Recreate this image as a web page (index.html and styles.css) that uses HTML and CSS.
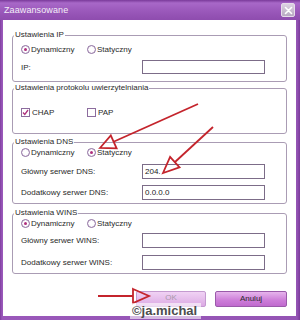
FILE: index.html
```html
<!DOCTYPE html>
<html lang="pl">
<head>
  <meta charset="UTF-8">
  <title>Zaawansowane</title>
  <link rel="stylesheet" href="styles.css">
</head>
<body>
  <div class="window">
    <div class="titlebar">
      <span class="title">Zaawansowane</span>
      <span class="close">
        <svg width="11" height="11" viewBox="0 0 11 11"><path d="M2.5 2.5l6 6M8.5 2.5l-6 6" stroke="#ffffff" stroke-width="1.6" stroke-linecap="round"/></svg>
      </span>
    </div>
    <div class="client">
      <fieldset class="group group-ip">
        <legend>Ustawienia IP</legend>
        <div class="rows">
          <div class="choice">
            <label class="opt"><span class="radio on"></span>Dynamiczny</label>
            <label class="opt"><span class="radio"></span>Statyczny</label>
          </div>
          <div class="field"><span class="label">IP:</span><span class="input"></span></div>
        </div>
      </fieldset>

      <fieldset class="group group-auth">
        <legend>Ustawienia protokolu uwierzytelniania</legend>
        <div class="rows">
          <div class="choice">
            <label class="opt"><span class="check on"><svg width="7" height="7" viewBox="0 0 7 7"><path d="M1 3.5l1.8 2L6 1" fill="none" stroke="#b0307e" stroke-width="1.3"/></svg></span>CHAP</label>
            <label class="opt"><span class="check"></span>PAP</label>
          </div>
        </div>
      </fieldset>

      <fieldset class="group group-dns">
        <legend>Ustawienia DNS</legend>
        <div class="rows">
          <div class="choice">
            <label class="opt"><span class="radio"></span>Dynamiczny</label>
            <label class="opt"><span class="radio on"></span>Statyczny</label>
          </div>
          <div class="field"><span class="label">Główny serwer DNS:</span><span class="input">204.</span></div>
          <div class="field"><span class="label">Dodatkowy serwer DNS:</span><span class="input">0.0.0.0</span></div>
        </div>
      </fieldset>

      <fieldset class="group group-wins">
        <legend>Ustawienia WINS</legend>
        <div class="rows">
          <div class="choice">
            <label class="opt"><span class="radio on"></span>Dynamiczny</label>
            <label class="opt"><span class="radio"></span>Statyczny</label>
          </div>
          <div class="field"><span class="label">Główny serwer WINS:</span><span class="input"></span></div>
          <div class="field"><span class="label">Dodatkowy serwer WINS:</span><span class="input"></span></div>
        </div>
      </fieldset>

      <div class="actions">
        <button class="btn btn-ok">OK</button>
        <button class="btn">Anuluj</button>
      </div>
    </div>

    <svg class="marks" width="300" height="320" viewBox="0 0 300 320">
      <g fill="none" stroke="#c4242c" stroke-width="1.8" stroke-linejoin="miter">
        <path d="M198 104L113 142"/>
        <path d="M100 148L110.8 135.5L116.6 148.3Z"/>
        <path d="M213 127L175 162"/>
        <path d="M163 173L170.1 157L179.5 167.4Z"/>
        <path d="M98 296H133"/>
        <path d="M133 289L149 296L133 303Z"/>
      </g>
    </svg>
    <span class="stamp">©ja.michal</span>
  </div>
</body>
</html>
```

FILE: styles.css
```css
body {
  margin: 0;
  font-family: 'Liberation Sans', Arial, sans-serif;
  font-size: 8px;
  color: #2a2a2a;
  background: #ffffff;
}
.window {
  position: relative;
  width: 300px;
  height: 320px;
  display: flex;
  flex-direction: column;
  background: linear-gradient(to right, #7e3e9e, #9a58ba 2px, #9454b4 297px, #7a3a9a);
}
.titlebar {
  height: 20px;
  display: flex;
  align-items: center;
  justify-content: space-between;
  padding: 0 5px 0 4px;
  background: linear-gradient(to bottom, #7a3a9a 0, #a868c8 3px, #9c5abc 10px, #8e4cae 20px);
}
.title {
  color: #f4eef8;
  font-size: 9px;
  letter-spacing: 0.1px;
}
.close {
  width: 12px;
  height: 12px;
  border: 1px solid #e6dcea;
  border-radius: 2px;
  display: flex;
  align-items: center;
  justify-content: center;
  background: linear-gradient(to bottom, #dcd2e2, #b8a8c2);
}
.client {
  flex: 1;
  margin: 0 4px 4px 3px;
  padding: 10px 9px 0;
  background: #ffffff;
  display: flex;
  flex-direction: column;
}
.group {
  margin: 0;
  padding: 0 8px;
  border: 1px solid #aa9cb4;
  border-radius: 3px;
  min-width: 0;
}
.group legend {
  padding: 0 1px;
  margin-left: -7px;
  line-height: 10px;
  color: #2a2a2a;
}
.rows {
  display: flex;
  flex-direction: column;
}
.group-ip .rows { padding: 4px 0 7px; gap: 6px; }
.group-auth { margin-top: 1px; }
.group-auth .rows { padding: 14px 0 16px; }
.group-dns { margin-top: 3px; }
.group-dns .rows { padding: 0 0 3px; }
.group-dns .field:nth-child(2) { margin-top: 7px; }
.group-dns .field:nth-child(3) { margin-top: 6px; }
.group-wins { margin-top: 4px; }
.group-wins .rows { padding: 0 0 3px; }
.group-wins .field:nth-child(2) { margin-top: 5px; }
.group-wins .field:nth-child(3) { margin-top: 7px; }
.choice {
  display: flex;
  height: 10px;
  align-items: center;
}
.opt {
  display: flex;
  align-items: center;
  gap: 1px;
}
.opt:first-child { width: 66px; }
.radio {
  width: 7px;
  height: 7px;
  border: 1px solid #8c6c9e;
  border-radius: 50%;
  background: radial-gradient(circle, #ffffff 40%, #e6dcec);
  display: flex;
  align-items: center;
  justify-content: center;
}
.radio.on::after {
  content: "";
  width: 3px;
  height: 3px;
  border-radius: 50%;
  background: #b0307e;
}
.check {
  width: 7px;
  height: 7px;
  border: 1px solid #8c6c9e;
  background: #ffffff;
  margin-right: 1px;
  display: flex;
  align-items: center;
  justify-content: center;
}
.field {
  display: flex;
  align-items: center;
  height: 15px;
}
.group-ip .field { height: 14px; }
.field .label { width: 121px; }
.input {
  width: 123px;
  height: 100%;
  box-sizing: border-box;
  border: 1px solid #7c6c88;
  padding-left: 2px;
  display: flex;
  align-items: center;
  color: #1a1a1a;
}
.actions {
  margin-top: 17px;
  display: flex;
  justify-content: flex-end;
  gap: 9px;
}
.btn {
  height: 16px;
  width: 72px;
  padding: 0;
  border: 1px solid #9a5aaa;
  border-radius: 2px;
  font-family: inherit;
  font-size: 8px;
  line-height: 8px;
  color: #2a2a2a;
  background: linear-gradient(to bottom, #e6b4ec, #cc7cd8 60%, #c06ace);
}
.btn-ok {
  width: 70px;
  padding-bottom: 3px;
  color: #a898aa;
  border-color: #c49ad0;
  background: linear-gradient(to bottom, #f0d2f4, #dcaae4);
}
.marks {
  position: absolute;
  left: 0;
  top: 0;
}
.stamp {
  position: absolute;
  left: 130px;
  top: 303px;
  height: 16px;
  padding: 0 4px 0 2px;
  line-height: 16px;
  font-size: 13px;
  font-weight: bold;
  color: #4c4c4c;
  background: rgba(255, 255, 255, 0.6);
}
```
